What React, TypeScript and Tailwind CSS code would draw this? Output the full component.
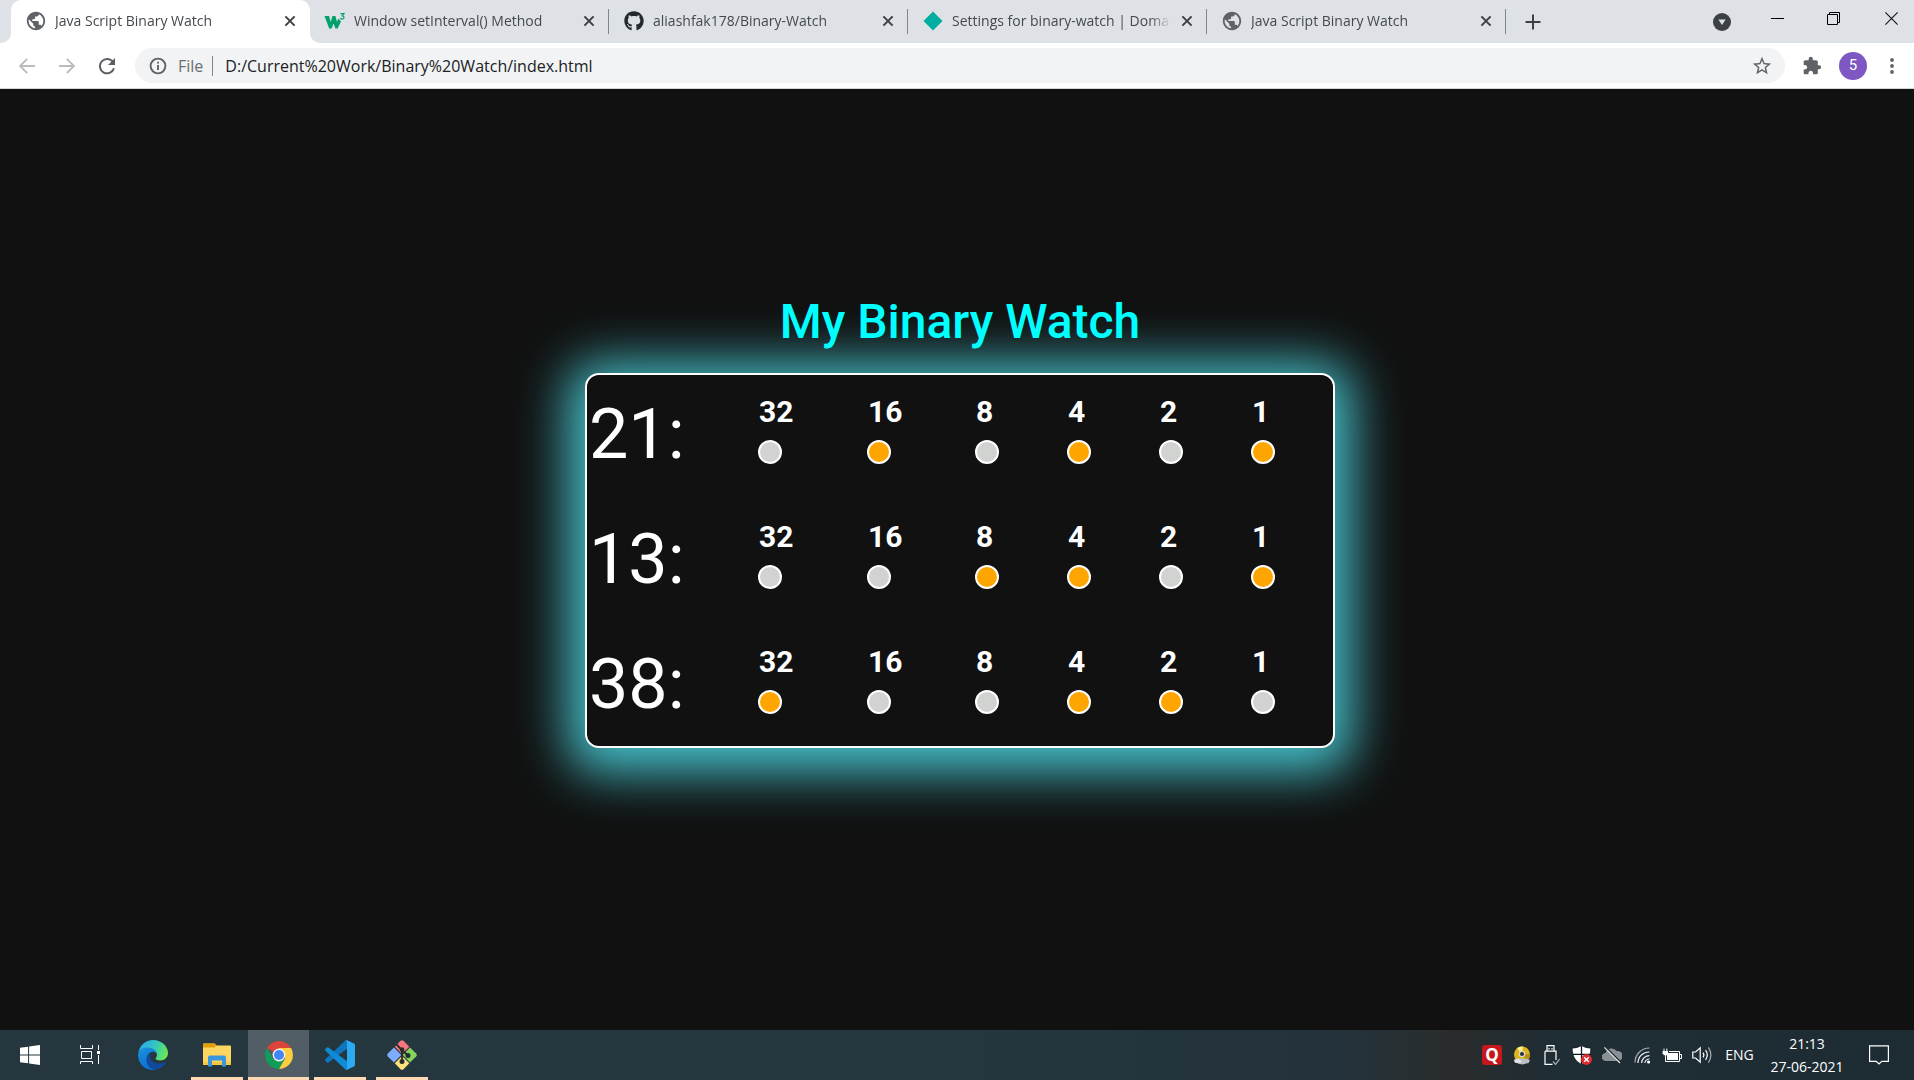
import type { ReactNode } from "react";
import { FaGithub } from "react-icons/fa";
import { MdExtension, MdPublic, MdStarBorder } from "react-icons/md";

/* ---------- browser icons ---------- */

function W3Icon() {
  return (
    <svg viewBox="0 0 22 20" className="h-5 w-[22px]" fill="none" aria-hidden="true">
      <path d="M0.5 5 H5 L6.8 11 L8.4 5 H11.4 L13 11 L14.2 7.6 L17 10.4 L13.6 17.4 H11.4 L9.6 12.6 L7.6 17.4 H5.2 Z" fill="#04a06a" />
      <path d="M16.4 2.6 H20 L18.2 4.8 C20.8 5 20.6 8.2 18 8.1 Q16.8 8.1 16.2 7.2" stroke="#04a06a" strokeWidth="1.2" />
    </svg>
  );
}

function DiamondIcon() {
  return (
    <svg viewBox="0 0 20 20" className="size-5" aria-hidden="true">
      <path d="M10 0.5 L19.5 10 L10 19.5 L0.5 10 Z" fill="#00ad9f" />
    </svg>
  );
}

function CloseIcon() {
  return (
    <svg viewBox="0 0 12 12" className="size-3" stroke="#3c4043" strokeWidth="2" aria-hidden="true">
      <path d="M1.4 1.4 L10.6 10.6 M10.6 1.4 L1.4 10.6" />
    </svg>
  );
}

function ArrowIcon({ flip = false }: { flip?: boolean }) {
  return (
    <svg viewBox="0 0 18 18" className={flip ? "size-[18px] rotate-180" : "size-[18px]"} fill="none" stroke="#b9bbbe" strokeWidth="1.8" aria-hidden="true">
      <path d="M17 9 H2.4 M9.2 1.8 L2 9 L9.2 16.2" />
    </svg>
  );
}

function ReloadIcon() {
  return (
    <svg viewBox="0 0 18 18" className="size-[18px]" aria-hidden="true">
      <path d="M15.2 5.2 A7.2 7.2 0 1 0 16 11.3" fill="none" stroke="#5b5f64" strokeWidth="2" />
      <path d="M17 1 V8 H10 Z" fill="#5b5f64" />
    </svg>
  );
}

function InfoIcon() {
  return (
    <svg viewBox="0 0 18 18" className="size-[18px] shrink-0" fill="none" stroke="#5f6368" strokeWidth="1.9" aria-hidden="true">
      <circle cx="9" cy="9" r="7.4" />
      <path d="M9 8 V13 M9 4.8 V6.6" />
    </svg>
  );
}

/* ---------- taskbar icons ---------- */

function WindowsIcon() {
  return (
    <svg viewBox="0 0 20 20" className="size-5" fill="#fff" aria-hidden="true">
      <path d="M0 2.8 L8.1 1.7 V9.5 H0 Z M9.1 1.5 L20 0 V9.5 H9.1 Z M0 10.5 H8.1 V18.3 L0 17.2 Z M9.1 10.5 H20 V20 L9.1 18.5 Z" />
    </svg>
  );
}

function TaskViewIcon() {
  return (
    <svg viewBox="0 0 20 20" className="size-5" fill="none" stroke="#fff" strokeWidth="1" aria-hidden="true">
      <path d="M0.5 0 V3.5 H12.5 V0 M0.5 19 V16.5 H12.5 V19 M1.5 6.5 H11.5 V13.5 H1.5 Z M18.5 0 V5 M18.5 10 V19" />
      <rect x="17" y="6" width="3" height="3" fill="#fff" stroke="none" />
    </svg>
  );
}

function EdgeIcon() {
  return (
    <svg viewBox="0 0 30 30" className="size-[30px]" aria-hidden="true">
      <defs>
        <linearGradient id="edgeTop" x1="0" y1="0.3" x2="1" y2="0.6">
          <stop offset="0" stopColor="#2fa9ea" />
          <stop offset="0.5" stopColor="#30c6c4" />
          <stop offset="1" stopColor="#6be84f" />
        </linearGradient>
        <linearGradient id="edgeLeft" x1="0" y1="0" x2="0.4" y2="1">
          <stop offset="0" stopColor="#1b93dd" />
          <stop offset="1" stopColor="#0b6fd0" />
        </linearGradient>
      </defs>
      <path d="M0.4 13 C1.5 5 8 0 15 0 C24 0 30 6.6 30 13 C30 18 26 20.4 22.4 20.4 C19.4 20.4 17.6 19.4 17.6 18.4 C17.6 17.6 19 17 19 15 C19 11.8 15 8 9.6 8 C5.5 8 2 10 0.4 13 Z" fill="url(#edgeTop)" />
      <path d="M0.1 15.5 C-0.2 11 4 7.4 9.3 7.4 C15 7.4 19.3 11 19 15 C18.6 13 17 11.8 15 11.8 C11.6 11.8 8.7 15 8.7 19.4 C8.7 24.5 12.4 28.8 17.5 29.8 C8 31.3 0.6 25 0.1 15.5 Z" fill="url(#edgeLeft)" />
      <path d="M12 13.2 C9.8 15 8.7 17 8.7 19.6 C8.7 25 12.8 29.4 18 29.6 C22.6 29 26 26.4 27.9 23 C28.2 22.4 27.7 22 27.1 22.3 C20.6 25.2 12.4 22.8 12.1 16.6 C12 15.2 12.1 14 12 13.2 Z" fill="#114a9c" />
    </svg>
  );
}

function ExplorerIcon() {
  return (
    <svg viewBox="0 0 28 24" className="h-6 w-7" aria-hidden="true">
      <path d="M0 1.5 Q0 0.5 1 0.5 H11.5 L13.6 2.4 H27 Q28 2.4 28 3.4 V22 H0 Z" fill="#ffd561" />
      <path d="M0 1.5 Q0 0.5 1 0.5 H11.5 L13.2 2.4 L11.5 4.6 H0 Z" fill="#e3a006" />
      <path d="M0 19 H28 V22 H0 Z" fill="#f9c440" />
      <path d="M5 23.5 V14.5 Q5 12.5 7 12.5 H21 Q23 12.5 23 14.5 V23.5 H19 V17.5 H9 V23.5 Z" fill="#3a96dd" />
    </svg>
  );
}

function ChromeIcon() {
  return (
    <svg viewBox="0 0 28 28" className="size-7" aria-hidden="true">
      <path d="M14 14 L1.9 7 A14 14 0 0 1 26.1 7 Z" fill="#db4437" />
      <path d="M1.9 7 A14 14 0 0 0 14 28 L20 17.5 L14 20.5 L8 17.5 Z" fill="#0f9d58" />
      <path d="M26.1 7 H14 L20.2 17.3 L14 28 A14 14 0 0 0 26.1 7 Z" fill="#ffcd40" />
      <circle cx="14" cy="14" r="6.4" fill="#f1f1f1" />
      <circle cx="14" cy="14" r="5" fill="#4285f4" />
    </svg>
  );
}

function VsCodeIcon() {
  return (
    <svg viewBox="0 0 30 30" className="size-[30px]" aria-hidden="true">
      <path d="M22 0.2 L22.4 8.4 L3.5 22.4 Q2.6 23 1.8 22.4 L0.4 21 Q-0.4 20 0.4 19.3 L20.2 0.8 Q21 0 22 0.2 Z" fill="#0d76bd" />
      <path d="M22 29.8 L22.4 21.6 L3.5 7.6 Q2.6 7 1.8 7.6 L0.4 9 Q-0.4 10 0.4 10.7 L20.2 29.2 Q21 30 22 29.8 Z" fill="#0f8bd3" />
      <path d="M22 0.2 L29 3.5 Q30 4 30 5.2 V24.8 Q30 26 29 26.5 L22 29.8 Q20.8 30 20.6 29 Q22 29.6 22 27.5 V2.5 Q22 0.6 20.6 1 Q21 0 22 0.2 Z" fill="#2ba9f2" />
    </svg>
  );
}

function GitIcon() {
  return (
    <svg viewBox="0 0 30 30" className="size-[30px]" aria-hidden="true">
      <path d="M13.5 0.8 Q15 -0.4 16.5 0.8 L22.3 6.8 L15 14 L7.8 6.8 Z" fill="#f9777c" />
      <path d="M23 7.6 L29.2 13.5 Q30.4 15 29.2 16.5 L23 22.4 L15.7 15 Z" fill="#86d45c" />
      <path d="M7 7.6 L14.3 15 L7 22.4 L0.8 16.5 Q-0.4 15 0.8 13.5 Z" fill="#7fabff" />
      <path d="M15 16 L22.3 23.2 L16.5 29.2 Q15 30.4 13.5 29.2 L7.8 23.2 Z" fill="#ffe27c" />
      <path d="M9.5 4.5 L15 10 V21 M15 10 L21 15.5" fill="none" stroke="#262c2e" strokeWidth="1.8" />
      <circle cx="15" cy="9.6" r="2.3" fill="#262c2e" />
      <circle cx="15" cy="21.5" r="2.5" fill="#262c2e" />
      <circle cx="21" cy="15.4" r="2.5" fill="#262c2e" />
    </svg>
  );
}

function QuickHealIcon() {
  return (
    <span className="flex size-5 items-center justify-center rounded-[3px] bg-[#c8161d] font-['Open_Sans',sans-serif] text-[17px] leading-5 font-bold text-white">
      Q
    </span>
  );
}

function DiscIcon() {
  return (
    <svg viewBox="0 0 18 20" className="h-5 w-[18px]" aria-hidden="true">
      <circle cx="9" cy="9.5" r="8" fill="#dfb51b" />
      <path d="M9 9.5 L4 3 A8 8 0 0 1 10 1.6 Z" fill="#fbef8e" />
      <path d="M9 9.5 L17 9 A8 8 0 0 1 13 16 Z" fill="#b98e10" />
      <circle cx="9" cy="9" r="3.2" fill="#d8d8d0" />
      <circle cx="9" cy="9" r="2" fill="#26323a" />
      <path d="M1 15 L5 13.4 H13 L17 15 L15.6 18 L9 19.6 L2 17.6 Z" fill="#b9bec2" />
      <path d="M1 15 L5 13.4 L9 16 L7 18.6 L2 17.6 Z" fill="#dfe3e6" />
    </svg>
  );
}

function UsbIcon() {
  return (
    <svg viewBox="0 0 16 21" className="h-[21px] w-4" fill="none" stroke="#fff" strokeWidth="1.2" aria-hidden="true">
      <path d="M3 6 V0.6 H10 V6 M1 6.2 H12 V15 M8.5 19.4 H1 V6.2" />
      <path d="M5 3 V4.4 M8 3 V4.4" />
      <path d="M9 16.5 L11.6 19.4 L15.6 14" stroke="#a9b4b8" />
    </svg>
  );
}

function ShieldIcon() {
  return (
    <svg viewBox="0 0 20 20" className="size-5" aria-hidden="true">
      <path d="M9.5 0.4 C12 2 15 3 18.8 3 C19 10 16.4 16 9.5 19.4 C2.6 16 0 10 0.2 3 C4 3 7 2 9.5 0.4 Z" fill="#fff" stroke="#10181c" strokeWidth="0.8" />
      <path d="M9.5 1 V19 M0.5 9.4 H18.5" stroke="#10181c" strokeWidth="1.3" />
      <circle cx="14.5" cy="14.5" r="5.4" fill="#dd2c2f" />
      <path d="M12.2 12.2 L16.8 16.8 M16.8 12.2 L12.2 16.8" stroke="#fff" strokeWidth="1.4" />
    </svg>
  );
}

function CloudOffIcon() {
  return (
    <svg viewBox="0 0 20 18" className="h-[18px] w-5" aria-hidden="true">
      <path d="M4 15 A4 4 0 0 1 3.6 7 A6.2 6.2 0 0 1 14.6 5 A5 5 0 0 1 16.6 15 Z" fill="#8a9195" />
      <path d="M3.6 1.4 L19 16.8" stroke="#1e2b31" strokeWidth="2" />
      <path d="M2.4 1.4 L18 17" stroke="#e3e6e7" strokeWidth="1.2" />
    </svg>
  );
}

function WifiIcon() {
  return (
    <svg viewBox="0 0 17 17" className="size-[17px]" fill="none" stroke="#e9eced" strokeWidth="1.2" aria-hidden="true">
      <path d="M1 15.5 A14.5 14.5 0 0 1 15.5 1" stroke="#a5afb3" />
      <path d="M4 16 A11 11 0 0 1 15.5 5 M7.5 16 A8 8 0 0 1 15.5 8.6 M10.8 16 A5 5 0 0 1 15.5 12" />
      <circle cx="14.6" cy="15" r="1.6" fill="#fff" stroke="none" />
    </svg>
  );
}

function BatteryIcon() {
  return (
    <svg viewBox="0 0 20 15" className="h-[15px] w-5" fill="none" stroke="#fff" strokeWidth="1" aria-hidden="true">
      <path d="M7 3.5 H17.5 V13.5 H3.5 V9.5" />
      <path d="M17.5 6.5 H19.5 V10.5 H17.5" />
      <rect x="5" y="5" width="11" height="7" fill="#fff" stroke="none" />
      <path d="M0.6 3 H6 V5.4 Q5.6 7.4 3.5 7.4 Q1.4 7.4 0.6 5.4 Z" fill="#fff" stroke="none" />
      <path d="M2 0.6 V3 M4.8 0.6 V3 M3.5 7 V10" />
    </svg>
  );
}

function VolumeIcon() {
  return (
    <svg viewBox="0 0 21 18" className="h-[18px] w-[21px]" fill="none" stroke="#fff" strokeWidth="1.2" aria-hidden="true">
      <path d="M0.8 6 H3.6 L8.2 1.8 V16.2 L3.6 12 H0.8 Z" />
      <path d="M11 6.6 Q12.8 9 11 11.4 M13.6 4.2 Q17 9 13.6 13.8" />
      <path d="M16.4 1.4 Q21.4 9 16.4 16.6" stroke="#a5afb3" />
    </svg>
  );
}

function ActionCenterIcon() {
  return (
    <svg viewBox="0 0 20 20" className="size-5" fill="none" stroke="#fff" strokeWidth="1.2" aria-hidden="true">
      <path d="M0.6 0.8 H19.4 V16.4 H12.8 L10 19 L7.2 16.4 H0.6 Z" />
    </svg>
  );
}

/* ---------- browser chrome ---------- */

const tabs: { title: string; icon: ReactNode }[] = [
  { title: "Java Script Binary Watch", icon: <MdPublic className="size-[22px] text-[#5f6368]" /> },
  { title: "Window setInterval() Method", icon: <W3Icon /> },
  { title: "aliashfak178/Binary-Watch", icon: <FaGithub className="size-5 text-[#24292e]" /> },
  { title: "Settings for binary-watch | Domai", icon: <DiamondIcon /> },
  { title: "Java Script Binary Watch", icon: <MdPublic className="size-[22px] text-[#5f6368]" /> },
];

function Tab({ title, icon, active }: { title: string; icon: ReactNode; active: boolean }) {
  const shell = active
    ? "relative flex h-[43px] w-[299px] min-w-0 items-center rounded-t-[10px] bg-white px-[14px] pb-[2px]"
    : "relative flex h-[43px] w-[299px] min-w-0 items-center px-[14px] pb-[2px]";
  return (
    <div className={shell}>
      {active ? (
        <>
          <span className="absolute bottom-0 -left-[10px] size-[10px] bg-white">
            <span className="block size-full rounded-br-[10px] bg-[#dee1e6]" />
          </span>
          <span className="absolute -right-[10px] bottom-0 size-[10px] bg-white">
            <span className="block size-full rounded-bl-[10px] bg-[#dee1e6]" />
          </span>
        </>
      ) : (
        <span className="absolute top-[9px] right-0 h-[25px] w-px bg-[#80868b]" />
      )}
      <button type="button" role="tab" aria-selected={active} className="flex min-w-0 flex-1 items-center gap-2 text-left">
        <span className="flex w-[22px] shrink-0 justify-center">{icon}</span>
        <span className="flex-1 overflow-hidden mask-r-from-90% text-[14px] leading-5 whitespace-nowrap text-[#45494d]">{title}</span>
      </button>
      <button type="button" aria-label={`Close ${title}`} className="ml-[10px] shrink-0">
        <CloseIcon />
      </button>
    </div>
  );
}

function TabStrip() {
  return (
    <div className="flex h-[43px] bg-[#dee1e6] pl-[11px]">
      <div role="tablist" className="flex min-w-0">
        {tabs.map((tab, i) => (
          <Tab key={i} title={tab.title} icon={tab.icon} active={i === 0} />
        ))}
      </div>
      <button type="button" aria-label="New tab" className="flex w-[54px] items-center justify-center">
        <svg viewBox="0 0 16 16" className="size-4" stroke="#3c4043" strokeWidth="2" aria-hidden="true">
          <path d="M8 0.5 V15.5 M0.5 8 H15.5" />
        </svg>
      </button>
      <button type="button" aria-label="Search tabs" className="ml-auto flex w-[54px] items-center justify-center">
        <svg viewBox="0 0 18 18" className="size-[18px]" aria-hidden="true">
          <circle cx="9" cy="9" r="9" fill="#3c4043" />
          <path d="M5.4 6.6 H12.6 L9 12 Z" fill="#dee1e6" />
        </svg>
      </button>
      <div className="flex h-[37px]">
        <button type="button" aria-label="Minimize" className="flex w-14 items-center justify-center">
          <span className="h-px w-[13px] bg-black" />
        </button>
        <button type="button" aria-label="Restore" className="flex w-[57px] items-center justify-center">
          <svg viewBox="0 0 13 13" className="size-[13px]" fill="none" stroke="#000" aria-hidden="true">
            <path d="M0.5 2.5 H10.5 V12.5 H0.5 Z M2.5 2.5 V0.5 H12.5 V10.5 H10.5" />
          </svg>
        </button>
        <button type="button" aria-label="Close window" className="flex w-[52px] items-center justify-center pl-[6px]">
          <svg viewBox="0 0 13 13" className="size-[13px]" stroke="#111" strokeWidth="1.1" aria-hidden="true">
            <path d="M0.4 0.4 L12.6 12.6 M12.6 0.4 L0.4 12.6" />
          </svg>
        </button>
      </div>
    </div>
  );
}

function Toolbar() {
  return (
    <div className="flex h-[46px] items-center border-b border-[#d5d6d8] bg-white pr-1 pl-[7px]">
      <button type="button" aria-label="Back" className="flex w-10 justify-center">
        <ArrowIcon />
      </button>
      <button type="button" aria-label="Forward" className="flex w-10 justify-center">
        <ArrowIcon flip />
      </button>
      <button type="button" aria-label="Reload" className="flex w-10 justify-center">
        <ReloadIcon />
      </button>
      <div className="ml-2 flex h-[35px] flex-1 items-center rounded-full bg-[#f1f3f4] pr-3 pl-[14px]">
        <InfoIcon />
        <label htmlFor="address" className="ml-[11px] text-[16px] leading-6 text-[#6a6e73]">
          File
        </label>
        <span className="ml-[9px] h-5 w-px bg-[#80868b]" />
        <input
          id="address"
          type="text"
          defaultValue="D:/Current%20Work/Binary%20Watch/index.html"
          className="ml-3 min-w-0 flex-1 bg-transparent text-[16px] leading-6 text-[#202124] outline-none"
        />
        <button type="button" aria-label="Bookmark this page">
          <MdStarBorder className="size-[22px] text-[#5f6368]" />
        </button>
      </div>
      <button type="button" aria-label="Extensions" className="ml-[7px] flex w-10 justify-center">
        <MdExtension className="size-5 text-[#5f6368]" />
      </button>
      <button type="button" aria-label="Profile" className="ml-[7px] flex size-7 items-center justify-center rounded-full bg-[#7e57c2] font-['Roboto',sans-serif] text-[15px] leading-none text-white">
        5
      </button>
      <button type="button" aria-label="Menu" className="ml-[7px] flex w-9 justify-center">
        <svg viewBox="0 0 4 16" className="h-4 w-1" fill="#5f6368" aria-hidden="true">
          <circle cx="2" cy="2" r="1.9" />
          <circle cx="2" cy="8" r="1.9" />
          <circle cx="2" cy="14" r="1.9" />
        </svg>
      </button>
    </div>
  );
}

/* ---------- watch ---------- */

const weights = [32, 16, 8, 4, 2, 1];
const time = [21, 13, 38];

function WatchRow({ value }: { value: number }) {
  return (
    <div className="flex h-[72px]">
      <div className="w-[169px] text-[70px] leading-[84px]">{value}:</div>
      <div className="grid grid-cols-[109px_108px_92px_92px_92px_24px]">
        {weights.map((weight) => (
          <div key={weight}>
            <div className="pl-px text-[30px] leading-10 font-bold">{weight}</div>
            <div
              className={
                value & weight
                  ? "mt-2 size-6 rounded-full border-2 border-white bg-[#ffa500]"
                  : "mt-2 size-6 rounded-full border-2 border-white bg-[#d1d3d1]"
              }
            />
          </div>
        ))}
      </div>
    </div>
  );
}

function Watch() {
  return (
    <main className="flex flex-1 flex-col items-center bg-[#111111] pt-[201px] pl-[6px] font-['Roboto',sans-serif] text-white">
      <h1 className="relative z-10 text-[48px] leading-[64px] font-medium text-[#00ffff]">My Binary Watch</h1>
      <section className="mt-[19px] flex w-full max-w-[750px] flex-col gap-[53px] rounded-[14px] border-2 border-white bg-[#111111] pt-[17px] pb-8 pl-[2px] shadow-[0_7px_50px_18px_#45bfc9]">
        {time.map((value) => (
          <WatchRow key={value} value={value} />
        ))}
      </section>
    </main>
  );
}

/* ---------- taskbar ---------- */

const apps: { name: string; icon: ReactNode; active?: boolean }[] = [
  { name: "File Explorer", icon: <ExplorerIcon /> },
  { name: "Google Chrome", icon: <ChromeIcon />, active: true },
  { name: "Visual Studio Code", icon: <VsCodeIcon /> },
  { name: "Git", icon: <GitIcon /> },
];

const tray: { name: string; icon: ReactNode }[] = [
  { name: "Quick Heal", icon: <QuickHealIcon /> },
  { name: "Disc", icon: <DiscIcon /> },
  { name: "Safely remove hardware", icon: <UsbIcon /> },
  { name: "Security", icon: <ShieldIcon /> },
  { name: "OneDrive", icon: <CloudOffIcon /> },
  { name: "Network", icon: <WifiIcon /> },
  { name: "Battery", icon: <BatteryIcon /> },
  { name: "Volume", icon: <VolumeIcon /> },
];

function Taskbar() {
  return (
    <footer className="flex h-[50px] bg-linear-[90deg,#25363f_0%,#25373f_45%,#24333b_70%,#2a2c2c_76%,#1f2d34_81%,#1d2b33_100%] text-white">
      <button type="button" aria-label="Start" className="flex w-[60px] items-center justify-center">
        <WindowsIcon />
      </button>
      <button type="button" aria-label="Task view" className="flex w-[60px] items-center justify-center">
        <TaskViewIcon />
      </button>
      <button type="button" aria-label="Microsoft Edge" className="flex w-[66px] items-center justify-center">
        <EdgeIcon />
      </button>
      {apps.map((app) => (
        <button
          key={app.name}
          type="button"
          aria-label={app.name}
          className={
            app.active
              ? "relative flex w-[61px] items-center justify-center bg-[#525e66]"
              : "relative flex w-[62px] items-center justify-center"
          }
        >
          {app.icon}
          <span
            className={
              app.active
                ? "absolute inset-x-0 bottom-0 h-[3px] bg-[#ffd9b3]"
                : "absolute inset-x-[5px] bottom-0 h-[3px] bg-[#ffd9b3]"
            }
          />
        </button>
      ))}
      <div className="ml-auto flex">
        {tray.map((item) => (
          <button key={item.name} type="button" aria-label={item.name} className="flex w-[30px] items-center justify-center">
            {item.icon}
          </button>
        ))}
        <button type="button" className="w-[45px] text-[14px] leading-6">
          ENG
        </button>
        <button type="button" className="flex w-[90px] flex-col items-center justify-center text-[14px] leading-[23px]">
          <span>21:13</span>
          <span>27-06-2021</span>
        </button>
        <button type="button" aria-label="Action center" className="mr-2 flex w-[54px] items-center justify-center">
          <ActionCenterIcon />
        </button>
      </div>
    </footer>
  );
}

export default function App() {
  return (
    <div className="flex min-h-screen flex-col font-['Open_Sans','Noto_Sans',sans-serif]">
      <TabStrip />
      <Toolbar />
      <Watch />
      <Taskbar />
    </div>
  );
}
